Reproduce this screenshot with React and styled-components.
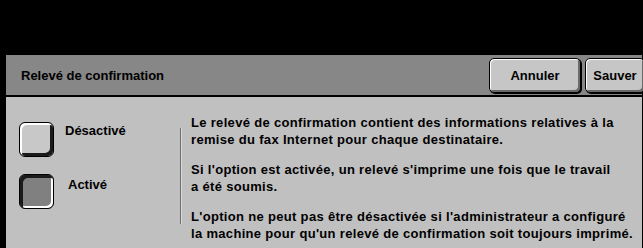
import React, { useState } from 'react';
import styled, { createGlobalStyle } from 'styled-components';

const GlobalStyle = createGlobalStyle`
    html, body {
        margin: 0;
        padding: 0;
        background: #000;
    }
    body {
        font-family: "Liberation Sans", Arial, sans-serif;
    }
`

const Screen = styled.div`
    width: 643px;
    height: 248px;
    background: #000;
    display: flex;
    flex-direction: column;
    overflow: hidden;
`

const TopSpace = styled.div`
    height: 55px;
    flex: none;
`

const Panel = styled.div`
    margin: 0 1px 5px 6px;
    flex: 1;
    display: flex;
    flex-direction: column;
`

const Header = styled.div`
    height: 40px;
    flex: none;
    background: #878787;
    border-bottom: 2px solid #000;
    display: flex;
    align-items: center;
    padding-left: 15px;
`

const Title = styled.h1`
    flex: 1;
    margin: 0;
    font-size: 13px;
    font-weight: bold;
    color: #000;
`

const Actions = styled.div`
    display: flex;
    gap: 4px;
    align-self: stretch;
    padding-top: 3px;
    margin-right: -3px;
`

const Button = styled.button`
    width: ${p => p.width}px;
    height: 35px;
    background: #c6c6c6;
    border: 1px solid #000;
    border-radius: 5px;
    box-shadow: inset 1px 1px 0 #fff, inset -2px -2px 0 #6a6a6a, 1px 1px 0 #000;
    font-family: inherit;
    font-size: 13px;
    font-weight: bold;
    color: #000;
    padding: 0;
    cursor: pointer;
`

const Body = styled.div`
    flex: 1;
    background: #c0c0c0;
    display: flex;
`

const Options = styled.div`
    width: 174px;
    flex: none;
    padding: 25px 0 0 13px;
    box-sizing: border-box;
    display: flex;
    flex-direction: column;
    gap: 17px;
`

const Option = styled.label`
    display: flex;
    align-items: flex-start;
    gap: ${p => (p.on ? 14 : 11)}px;
    cursor: pointer;
    font-size: 13px;
    font-weight: bold;
    color: #000;
`

const Box = styled.span`
    width: 35px;
    height: 35px;
    flex: none;
    box-sizing: border-box;
    border-radius: 6px;
    border: 1px solid #000;
    background: ${p => (p.on ? '#808080' : '#c8c8c8')};
    box-shadow: ${p => (p.on
        ? 'inset 3px 3px 0 #1a1a1a, inset -2px -2px 0 #fff'
        : 'inset 2px 2px 0 #fff, inset -3px -3px 0 #1a1a1a')};
`

const LabelText = styled.span`
    padding-top: ${p => (p.on ? 3 : 1)}px;
`

const Divider = styled.div`
    width: 1px;
    flex: none;
    background: #6e6e6e;
    margin: 31px 0 31px;
    box-shadow: 1px 0 0 #d8d8d8;
`

const Text = styled.div`
    flex: 1;
    padding: 17px 4px 0 10px;
`

const Para = styled.p`
    margin: 0 0 13px;
    font-size: 13px;
    font-weight: bold;
    line-height: 17px;
    color: #000;
    letter-spacing: 0.32px;
    white-space: nowrap;
`

const App = () => {
    const [active, setActive] = useState(true);
    return (
        <Screen>
            <GlobalStyle />
            <TopSpace />
            <Panel>
                <Header>
                    <Title>Relevé de confirmation</Title>
                    <Actions>
                        <Button width={92}>Annuler</Button>
                        <Button width={60}>Sauver</Button>
                    </Actions>
                </Header>
                <Body>
                    <Options>
                        <Option onClick={() => setActive(false)}>
                            <Box on={!active ? 1 : 0} />
                            <LabelText>Désactivé</LabelText>
                        </Option>
                        <Option on={1} onClick={() => setActive(true)}>
                            <Box on={active ? 1 : 0} />
                            <LabelText on={1}>Activé</LabelText>
                        </Option>
                    </Options>
                    <Divider />
                    <Text>
                        <Para>Le relevé de confirmation contient des informations relatives à la<br />remise du fax Internet pour chaque destinataire.</Para>
                        <Para>Si l'option est activée, un relevé s'imprime une fois que le travail<br />a été soumis.</Para>
                        <Para>L'option ne peut pas être désactivée si l'administrateur a configuré<br />la machine pour qu'un relevé de confirmation soit toujours imprimé.</Para>
                    </Text>
                </Body>
            </Panel>
        </Screen>
    )
}

export default App
